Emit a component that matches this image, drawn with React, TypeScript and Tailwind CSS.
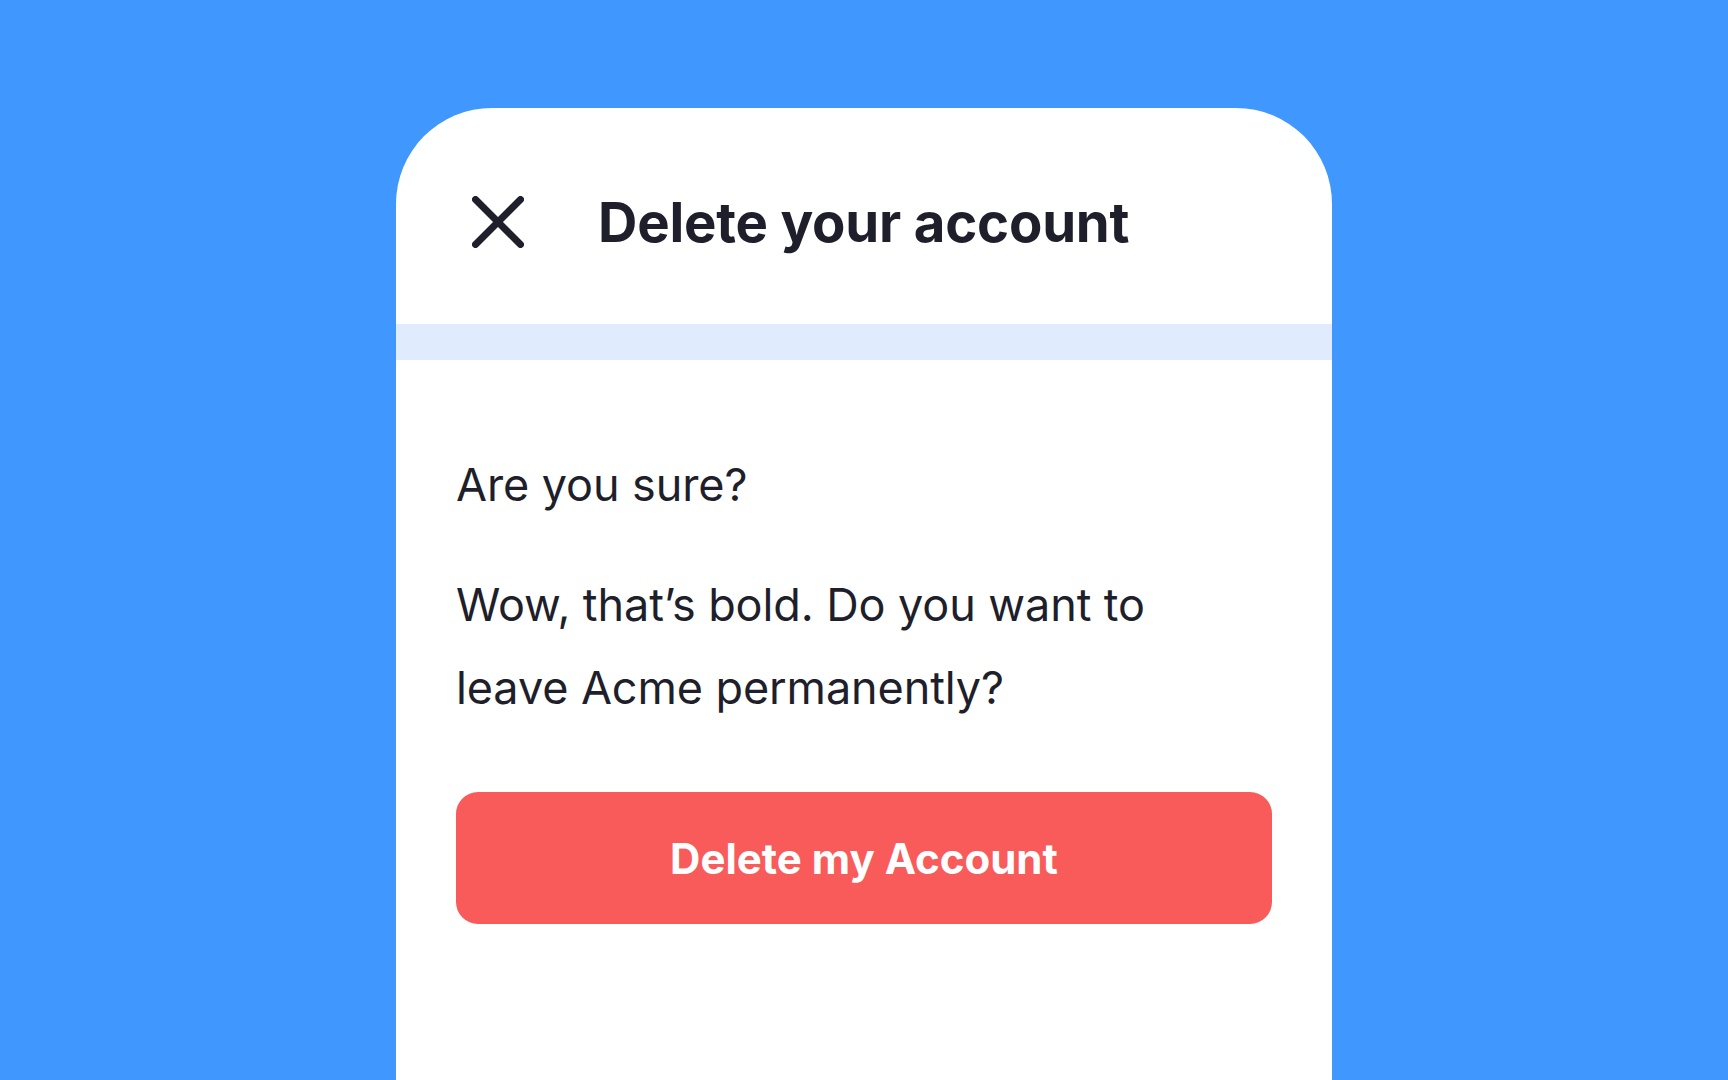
export default function App() {
  return (
    <div className="w-full h-[1080px] overflow-hidden bg-[#4097fe] flex justify-center pt-[108px] font-['Inter',sans-serif]">
      <div className="w-[936px] h-[1100px] bg-white rounded-t-[96px] flex flex-col">
        {/* Header */}
        <div className="h-[216px] flex items-center pl-[76px] pt-[12px]">
          <svg width="52" height="52" viewBox="0 0 52 52" className="shrink-0">
            <path d="M3.5 3.5L48.5 48.5M48.5 3.5L3.5 48.5" stroke="#1f1f2b" strokeWidth="7" strokeLinecap="round" />
          </svg>
          <h1 className="ml-[74px] text-[54.5px] leading-none font-bold text-[#1f1f2b] tracking-[-0.2px]">
            Delete your account
          </h1>
        </div>

        <div className="h-[36px] bg-[#e0ecfd]" />

        {/* Body */}
        <div className="px-[60px] pt-[83px] text-[#1f1f2b]">
          <p className="text-[45px] leading-[83px] tracking-[-0.1px]">Are you sure?</p>
          <p className="mt-[37px] text-[45px] leading-[83px] tracking-[-0.1px]">
            Wow, that’s bold. Do you want to
            <br />
            leave Acme permanently?
          </p>
          <button className="mt-[63px] w-full h-[132px] rounded-[22px] bg-[#f95a5a] text-white text-[42px] font-bold">
            Delete my Account
          </button>
        </div>
      </div>
    </div>
  );
}
